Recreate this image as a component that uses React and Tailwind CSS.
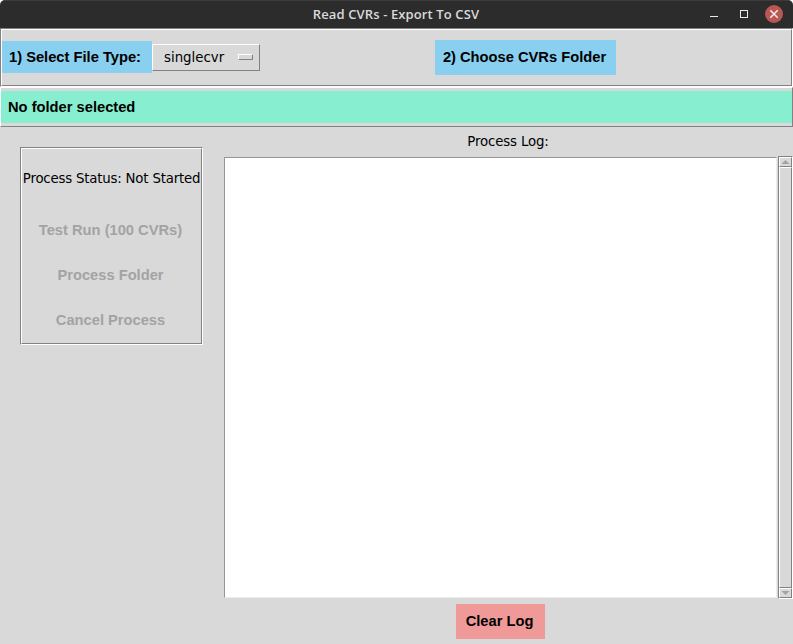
import React from "react";

const bold = "font-['Liberation_Sans',Arial,sans-serif] text-[14.7px] leading-[17px] font-bold whitespace-nowrap";
const plain = "font-['DejaVu_Sans',sans-serif] text-[13.33px] leading-[18px] whitespace-nowrap";

function TitleBar() {
  return (
    <div className="bg-white">
      <header className="flex h-7 items-center rounded-t-[5px] border-t border-[#3c3c3c] bg-[#2c2c2c]">
        <div className="w-[90px]" />
        <h1 className="flex-1 pr-px pb-[2px] text-center font-['Open_Sans','Noto_Sans',sans-serif] text-[13px] leading-[18px] font-semibold tracking-[0.12px] text-[#dadada]">
          Read CVRs - Export To CSV
        </h1>
        <svg className="h-[27px] w-[90px]" viewBox="703 1 90 27" fill="none">
          <path d="M710 16.5H718" stroke="#e8e8e8" />
          <rect x="740.5" y="10.5" width="7" height="7" stroke="#e8e8e8" />
          <circle cx="774" cy="14" r="9" fill="#b85753" />
          <path d="M770.3 10.3L777.7 17.7M777.7 10.3L770.3 17.7" stroke="#f2e8e8" strokeWidth="1.6" />
        </svg>
      </header>
    </div>
  );
}

function Groove({ className, children }) {
  return (
    <div className="border border-t-[#828282] border-r-white border-b-white border-l-[#828282]">
      <div className={"border border-t-white border-r-[#828282] border-b-[#828282] border-l-white " + className}>
        {children}
      </div>
    </div>
  );
}

function ScrollBar() {
  const raised = "border border-t-white border-l-white border-r-[#828282] border-b-[#828282]";
  return (
    <div className="flex h-[443px] w-[15px] flex-col border border-t-[#828282] border-l-[#828282] border-r-white border-b-white bg-[#d9d9d9]">
      <div className={raised + " h-[10px]"}>
        <svg className="h-[8px] w-[11px]" viewBox="0 0 11 8">
          <path d="M5.5 2L9.5 6H1.5Z" fill="#a3a3a3" />
        </svg>
      </div>
      <div className={raised + " flex-1"} />
      <div className={raised + " h-[10px]"}>
        <svg className="h-[8px] w-[11px]" viewBox="0 0 11 8">
          <path d="M1.5 2H9.5L5.5 6Z" fill="#a3a3a3" />
        </svg>
      </div>
    </div>
  );
}

export default function App() {
  return (
    <div className="h-[644px] w-[793px] overflow-hidden bg-[#d9d9d9] text-black">
      <TitleBar />
      <Groove className="flex h-[57px] items-start">
        <div className={bold + " mt-[11px] h-8 w-[150px] bg-[#89cfef] pt-2 pl-[7px]"}>1) Select File Type:</div>
        <button className="mt-[14px] flex h-[27px] w-[108px] items-center justify-between border border-t-white border-r-[#828282] border-b-[#828282] border-l-white pr-[6px] pb-px pl-[11px]">
          <span className={plain + " pt-[2px]"}>singlecvr</span>
          <span className="h-[6px] w-[15px] border border-t-white border-r-[#828282] border-b-[#828282] border-l-white" />
        </button>
        <button className={bold + " mt-[10px] ml-[175px] h-[35px] w-[181px] bg-[#89cfef] pr-[2px] pb-px"}>2) Choose CVRs Folder</button>
      </Groove>
      <div className="h-10 border border-t-white border-r-[#828282] border-b-[#828282] border-l-white py-[3px]">
        <div className={bold + " h-8 bg-[#87efcf] pt-2 pl-[7px]"}>No folder selected</div>
      </div>
      <main className="flex">
        <aside className="mt-5 ml-5 w-[183px]">
          <Groove className="flex h-[196px] flex-col items-center pt-[21px]">
            <div className={plain + " tracking-[-0.2px]"}>Process Status: Not Started</div>
            <div className="mt-[34px] flex flex-col items-center gap-7 pr-[2px] text-[#a3a3a3]">
              <button disabled className={bold}>Test Run (100 CVRs)</button>
              <button disabled className={bold}>Process Folder</button>
              <button disabled className={bold}>Cancel Process</button>
            </div>
          </Groove>
        </aside>
        <section className="ml-[21px] w-[569px]">
          <div className={plain + " mt-[6px] h-[23px] pr-px text-center tracking-[-0.15px]"}>Process Log:</div>
          <div className="flex">
            <div className="mt-px mr-px h-[441px] w-[553px] border border-t-[#969696] border-r-[#ececec] border-b-[#ececec] border-l-[#969696] bg-white" />
            <ScrollBar />
          </div>
          <button className={bold + " mt-[5px] ml-[232px] block h-[35px] w-[89px] bg-[#ef9999] pr-[2px] pb-px"}>Clear Log</button>
        </section>
      </main>
    </div>
  );
}
